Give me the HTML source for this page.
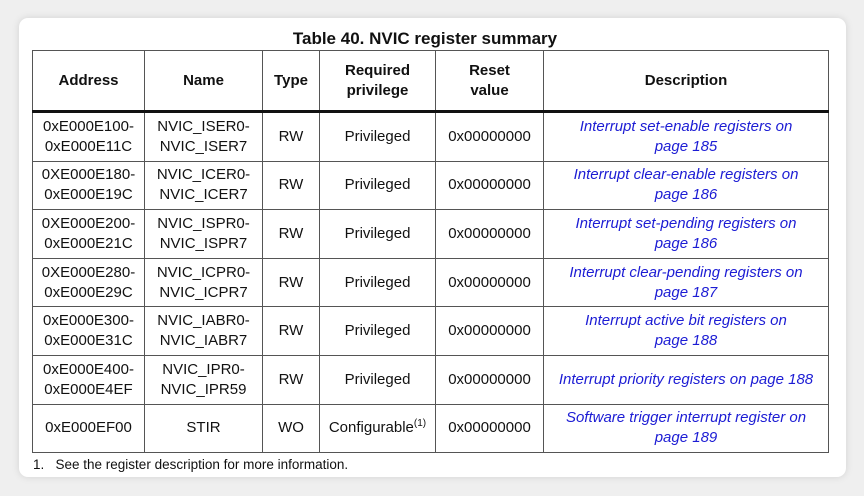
<!DOCTYPE html>
<html><head><style>
html,body{margin:0;padding:0;}
body{width:864px;height:496px;background:#efefef;position:relative;overflow:hidden;font-family:"Liberation Sans",Arial,sans-serif;}
.card{position:absolute;left:19px;top:18px;width:827px;height:459px;background:#fff;border-radius:9px;box-shadow:0 0 8px rgba(0,0,0,0.12);}
.title{position:absolute;left:0;width:850px;top:29px;text-align:center;font-weight:bold;font-size:17px;color:#111;}
table{position:absolute;left:32px;top:50px;border-collapse:collapse;table-layout:fixed;width:796px;}
td,th{border:1px solid #555;text-align:center;font-size:15px;line-height:20px;color:#111;padding:0 2px;}
th{height:59px;font-weight:bold;border-bottom:3px solid #111;}
td{height:47.6px;}
td.d{color:#1c1cd4;font-style:italic;}
sup{font-size:10px;line-height:0;}
.foot{position:absolute;left:33px;top:457px;font-size:13.5px;color:#111;}
</style></head><body>
<div class="card"></div>
<div class="title">Table 40. NVIC register summary</div>
<table>
<colgroup><col style="width:112px"><col style="width:118px"><col style="width:57px"><col style="width:116px"><col style="width:108px"><col style="width:285px"></colgroup>
<tr><th>Address</th><th>Name</th><th>Type</th><th>Required<br>privilege</th><th>Reset<br>value</th><th>Description</th></tr>
<tr><td>0xE000E100-<br>0xE000E11C</td><td>NVIC_ISER0-<br>NVIC_ISER7</td><td>RW</td><td>Privileged</td><td>0x00000000</td><td class="d">Interrupt set-enable registers on<br>page 185</td></tr>
<tr><td>0XE000E180-<br>0xE000E19C</td><td>NVIC_ICER0-<br>NVIC_ICER7</td><td>RW</td><td>Privileged</td><td>0x00000000</td><td class="d">Interrupt clear-enable registers on<br>page 186</td></tr>
<tr><td>0XE000E200-<br>0xE000E21C</td><td>NVIC_ISPR0-<br>NVIC_ISPR7</td><td>RW</td><td>Privileged</td><td>0x00000000</td><td class="d">Interrupt set-pending registers on<br>page 186</td></tr>
<tr><td>0XE000E280-<br>0xE000E29C</td><td>NVIC_ICPR0-<br>NVIC_ICPR7</td><td>RW</td><td>Privileged</td><td>0x00000000</td><td class="d">Interrupt clear-pending registers on<br>page 187</td></tr>
<tr><td>0xE000E300-<br>0xE000E31C</td><td>NVIC_IABR0-<br>NVIC_IABR7</td><td>RW</td><td>Privileged</td><td>0x00000000</td><td class="d">Interrupt active bit registers on<br>page 188</td></tr>
<tr><td>0xE000E400-<br>0xE000E4EF</td><td>NVIC_IPR0-<br>NVIC_IPR59</td><td>RW</td><td>Privileged</td><td>0x00000000</td><td class="d">Interrupt priority registers on page 188</td></tr>
<tr><td>0xE000EF00</td><td>STIR</td><td>WO</td><td>Configurable<sup>(1)</sup></td><td>0x00000000</td><td class="d">Software trigger interrupt register on<br>page 189</td></tr>
</table>
<div class="foot">1.&nbsp;&nbsp;&nbsp;See the register description for more information.</div>
</body></html>
